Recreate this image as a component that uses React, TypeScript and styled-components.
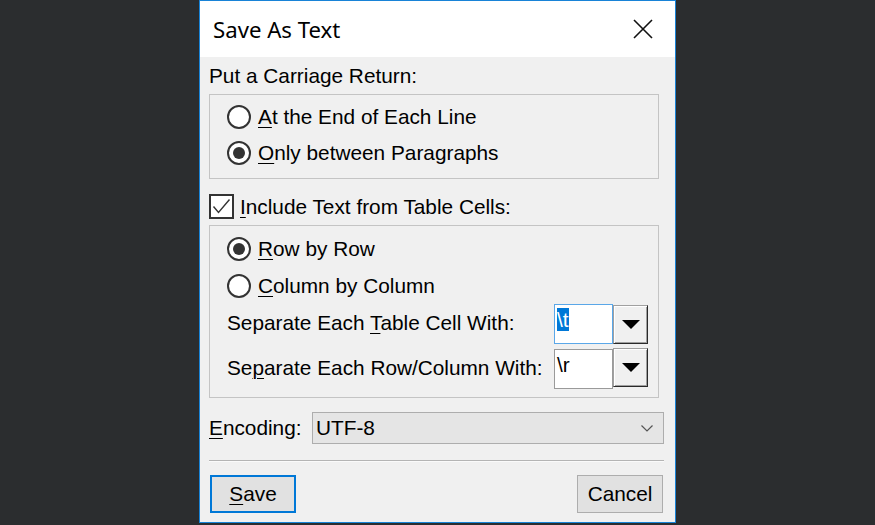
import styled, { createGlobalStyle } from "styled-components";

const GlobalStyle = createGlobalStyle`
  html, body {
    margin: 0;
    padding: 0;
    background: #2b2d2f;
  }
  body {
    height: 525px;
    overflow: hidden;
  }
`;

const Page = styled.div`
  display: flex;
  justify-content: center;
  height: 525px;
  font-family: "Liberation Sans", Arial, sans-serif;
  font-size: 20.8px;
  color: #000;
`;

const Dialog = styled.div`
  box-sizing: border-box;
  width: 477px;
  height: 523px;
  border: 1px solid #1883d7;
  background: #f0f0f0;
  display: flex;
  flex-direction: column;
`;

const TitleBar = styled.div`
  height: 56px;
  background: #fff;
  display: flex;
  align-items: center;
  justify-content: space-between;
  padding: 0 22px 0 13px;
`;

const Title = styled.div`
  font-family: "Noto Sans", "Open Sans", sans-serif;
  font-size: 22.2px;
`;

const CloseIcon = () => (
  <svg width="20" height="20" viewBox="0 0 20 20">
    <path d="M1 1 L19 19 M19 1 L1 19" stroke="#111" strokeWidth="1.6" fill="none" />
  </svg>
);

const Body = styled.div`
  display: flex;
  flex-direction: column;
  padding: 0 11px 0 9px;
`;

const Caption = styled.div`
  height: 37px;
  line-height: 37px;
`;

const GroupBox = styled.div<{ $pad: string }>`
  border: 1px solid #c4c4c4;
  margin-right: 5px;
  padding: ${(p) => p.$pad};
  display: flex;
  flex-direction: column;
`;

const OptionRow = styled.label<{ $h: number }>`
  display: flex;
  align-items: center;
  height: ${(p) => p.$h}px;
  gap: 7px;
`;

const RadioCircle = styled.span<{ $on?: boolean }>`
  box-sizing: border-box;
  width: 24px;
  height: 24px;
  border-radius: 50%;
  border: 2px solid #333;
  background: #fff;
  display: flex;
  align-items: center;
  justify-content: center;
  &::after {
    content: "";
    display: ${(p) => (p.$on ? "block" : "none")};
    width: 12px;
    height: 12px;
    border-radius: 50%;
    background: #333;
  }
`;

const Key = styled.span`
  text-decoration: underline;
  text-underline-offset: 3px;
  text-decoration-thickness: 1px;
`;

const CheckRow = styled.label`
  display: flex;
  align-items: center;
  gap: 6px;
  height: 25px;
  margin: 15px 0 6px;
`;

const CheckBox = styled.span`
  box-sizing: border-box;
  width: 25px;
  height: 25px;
  border: 2px solid #333;
  background: #fff;
  display: flex;
  align-items: center;
  justify-content: center;
`;

const FieldRow = styled.div<{ $mt: number }>`
  display: flex;
  align-items: center;
  height: 40px;
  margin-top: ${(p) => p.$mt}px;
  padding-right: 10px;
`;

const FieldLabel = styled.span`
  flex: 1;
  margin-top: -2px;
`;

const TextField = styled.div<{ $focus?: boolean }>`
  box-sizing: border-box;
  width: 59px;
  height: 40px;
  background: #fff;
  border: 1px solid ${(p) => (p.$focus ? "#5aa7e8" : "#9a9a9a")};
  padding: 3px 0 0 2px;
  line-height: 24px;
`;

const Selected = styled.span`
  background: #0078d7;
  color: #fff;
`;

const ArrowButton = styled.div<{ $up?: number }>`
  box-sizing: border-box;
  width: 35px;
  height: 39px;
  margin-top: ${(p) => -(p.$up ?? 0)}px;
  background: #f0f0f0;
  border: 1px solid;
  border-color: #a0a0a0 #2a2a2a #2a2a2a #a0a0a0;
  box-shadow: inset 1px 1px #fff, inset -1px -1px #a0a0a0;
  display: flex;
  align-items: center;
  justify-content: center;
`;

const Triangle = () => (
  <svg width="18" height="9" viewBox="0 0 18 9">
    <path d="M0 0 H18 L9 9 Z" fill="#000" />
  </svg>
);

const EncodingRow = styled.div`
  display: flex;
  align-items: center;
  margin-top: 14px;
  height: 32px;
`;

const EncodingLabel = styled.span`
  width: 103px;
`;

const Select = styled.div`
  box-sizing: border-box;
  flex: 1;
  height: 32px;
  background: #e5e5e5;
  border: 1px solid #adadad;
  display: flex;
  align-items: center;
  justify-content: space-between;
  padding: 0 10px 0 3px;
`;

const Chevron = () => (
  <svg width="12" height="7" viewBox="0 0 12 7">
    <path d="M0.5 0.5 L6 6 L11.5 0.5" stroke="#555" strokeWidth="1.2" fill="none" />
  </svg>
);

const Separator = styled.div`
  height: 1px;
  background: #b4b4b4;
  border-bottom: 1px solid #fafafa;
  margin-top: 16px;
`;

const ButtonRow = styled.div`
  display: flex;
  justify-content: space-between;
  margin-top: 13px;
  padding-left: 1px;
`;

const PushButton = styled.div<{ $default?: boolean }>`
  box-sizing: border-box;
  width: 86px;
  height: 38px;
  background: #e1e1e1;
  border: ${(p) => (p.$default ? "2px solid #0078d7" : "1px solid #adadad")};
  display: flex;
  align-items: center;
  justify-content: center;
  margin-right: ${(p) => (p.$default ? 0 : 1)}px;
`;

export default function App() {
  return (
    <Page>
      <GlobalStyle />
      <Dialog>
        <TitleBar>
          <Title>Save As Text</Title>
          <CloseIcon />
        </TitleBar>
        <Body>
          <Caption>Put a Carriage Return:</Caption>
          <GroupBox $pad="4px 0 7px 17px">
            <OptionRow $h={36}>
              <RadioCircle />
              <span>
                <Key>A</Key>t the End of Each Line
              </span>
            </OptionRow>
            <OptionRow $h={36}>
              <RadioCircle $on />
              <span>
                <Key>O</Key>nly between Paragraphs
              </span>
            </OptionRow>
          </GroupBox>
          <CheckRow>
            <CheckBox>
              <svg width="19" height="17" viewBox="0 0 19 17">
                <path d="M1.5 8.5 L6.5 14.5 L17.5 1.5" stroke="#333" strokeWidth="1.4" fill="none" />
              </svg>
            </CheckBox>
            <span>
              <Key>I</Key>nclude Text from Table Cells:
            </span>
          </CheckRow>
          <GroupBox $pad="4px 0 8px 17px">
            <OptionRow $h={37}>
              <RadioCircle $on />
              <span>
                <Key>R</Key>ow by Row
              </span>
            </OptionRow>
            <OptionRow $h={37}>
              <RadioCircle />
              <span>
                <Key>C</Key>olumn by Column
              </span>
            </OptionRow>
            <FieldRow $mt={0}>
              <FieldLabel>
                Separate Each <Key>T</Key>able Cell With:
              </FieldLabel>
              <TextField $focus>
                <Selected>\t</Selected>
              </TextField>
              <ArrowButton>
                <Triangle />
              </ArrowButton>
            </FieldRow>
            <FieldRow $mt={5}>
              <FieldLabel>
                Se<Key>p</Key>arate Each Row/Column With:
              </FieldLabel>
              <TextField>\r</TextField>
              <ArrowButton $up={3}>
                <Triangle />
              </ArrowButton>
            </FieldRow>
          </GroupBox>
          <EncodingRow>
            <EncodingLabel>
              <Key>E</Key>ncoding:
            </EncodingLabel>
            <Select>
              <span>UTF-8</span>
              <Chevron />
            </Select>
          </EncodingRow>
          <Separator />
          <ButtonRow>
            <PushButton $default>
              <span>
                <Key>S</Key>ave
              </span>
            </PushButton>
            <PushButton>Cancel</PushButton>
          </ButtonRow>
        </Body>
      </Dialog>
    </Page>
  );
}
